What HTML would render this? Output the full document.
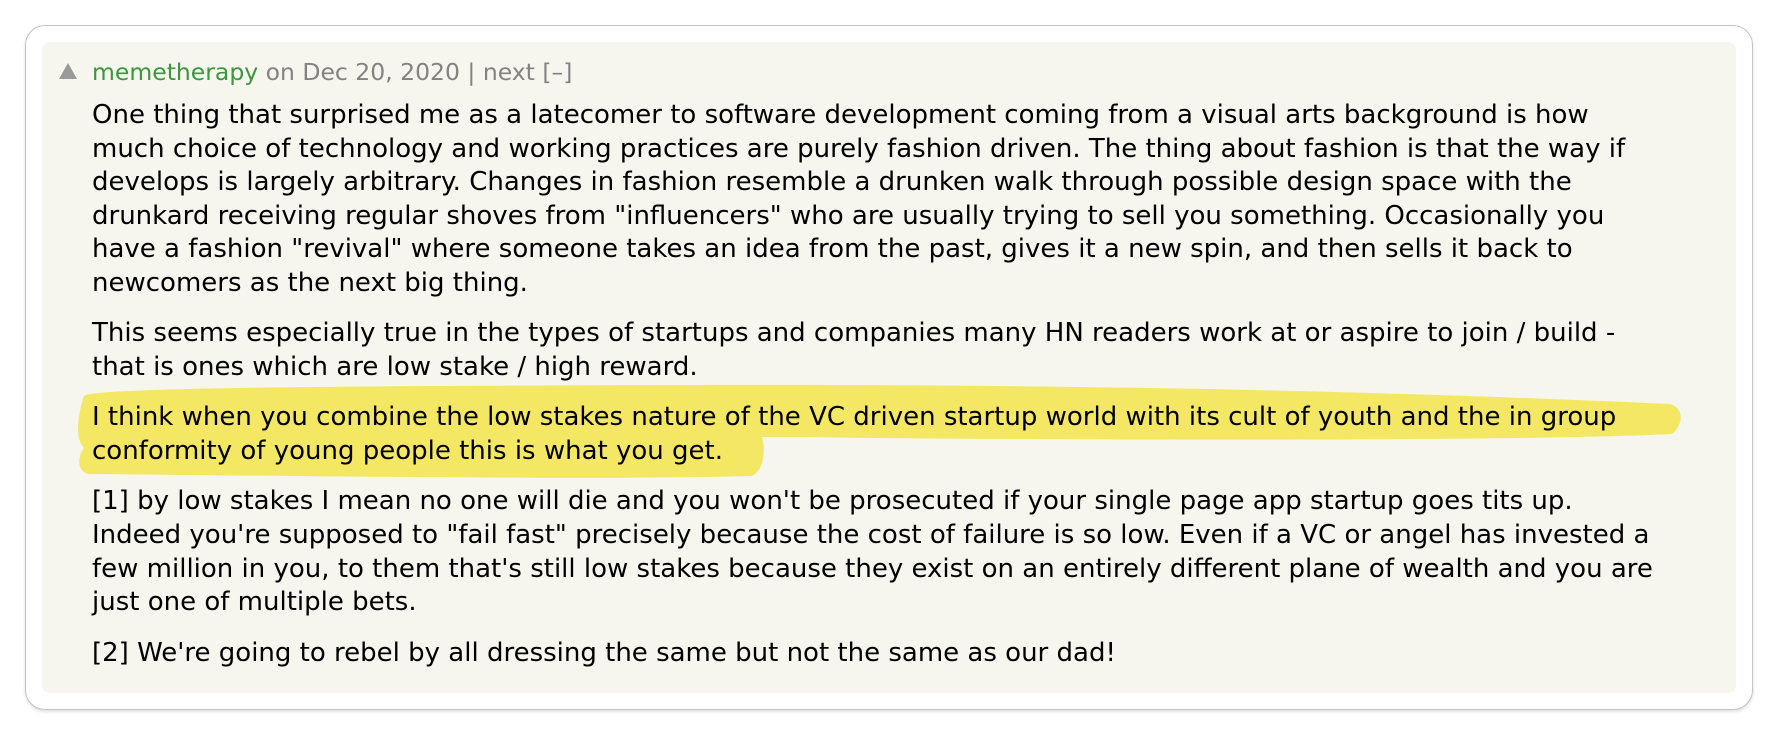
<!DOCTYPE html>
<html><head><meta charset="utf-8"><style>
html,body{margin:0;padding:0;background:#fff;width:1778px;height:736px;overflow:hidden}
.card{position:absolute;left:25px;top:25px;width:1726px;height:683px;border:1.5px solid #c4c4c4;border-radius:20px;box-shadow:0 2px 3px rgba(0,0,0,.12);background:#fff}
.inner{position:absolute;left:42px;top:42px;width:1694px;height:651px;background:#f6f6ef;border-radius:8px}
.txt{position:absolute;left:92px;font-family:"DejaVu Sans","Liberation Sans",sans-serif;font-size:26px;line-height:33.6px;color:#000;white-space:nowrap}
.hd{top:56px;color:#828282;font-size:23.5px}
.hd .u{color:#3c963c}
.tri{position:absolute;left:59px;top:63px;width:0;height:0;border-left:9px solid transparent;border-right:9px solid transparent;border-bottom:16px solid #9a9a9a}
.body{top:99px}
.body p{margin:0 0 16.8px 0}
svg{position:absolute;left:0;top:0}
</style></head><body>
<div class="card"></div>
<div class="inner"></div>
<svg width="1778" height="736">
<path d="M84 396 C 92 388, 300 386, 700 385 C 1100 384, 1400 392, 1670 404 C 1684 408, 1684 424, 1672 434 C 1500 442, 1000 440, 800 437 L 762 437 C 766 450, 764 470, 752 476 C 600 480, 300 476, 88 474 C 76 470, 78 456, 84 448 C 76 440, 76 420, 84 396 Z" fill="#f3e551" opacity="0.88"/>
</svg>
<div class="tri"></div>
<div class="txt hd"><span class="u">memetherapy</span> on Dec 20, 2020 | next [–]</div>
<div class="txt body">
<p>One thing that surprised me as a latecomer to software development coming from a visual arts background is how<br>much choice of technology and working practices are purely fashion driven. The thing about fashion is that the way if<br>develops is largely arbitrary. Changes in fashion resemble a drunken walk through possible design space with the<br>drunkard receiving regular shoves from "influencers" who are usually trying to sell you something. Occasionally you<br>have a fashion "revival" where someone takes an idea from the past, gives it a new spin, and then sells it back to<br>newcomers as the next big thing.</p>
<p>This seems especially true in the types of startups and companies many HN readers work at or aspire to join / build -<br>that is ones which are low stake / high reward.</p>
<p>I think when you combine the low stakes nature of the VC driven startup world with its cult of youth and the in group<br>conformity of young people this is what you get.</p>
<p>[1] by low stakes I mean no one will die and you won't be prosecuted if your single page app startup goes tits up.<br>Indeed you're supposed to "fail fast" precisely because the cost of failure is so low. Even if a VC or angel has invested a<br>few million in you, to them that's still low stakes because they exist on an entirely different plane of wealth and you are<br>just one of multiple bets.</p>
<p>[2] We're going to rebel by all dressing the same but not the same as our dad!</p>
</div>
</body></html>
